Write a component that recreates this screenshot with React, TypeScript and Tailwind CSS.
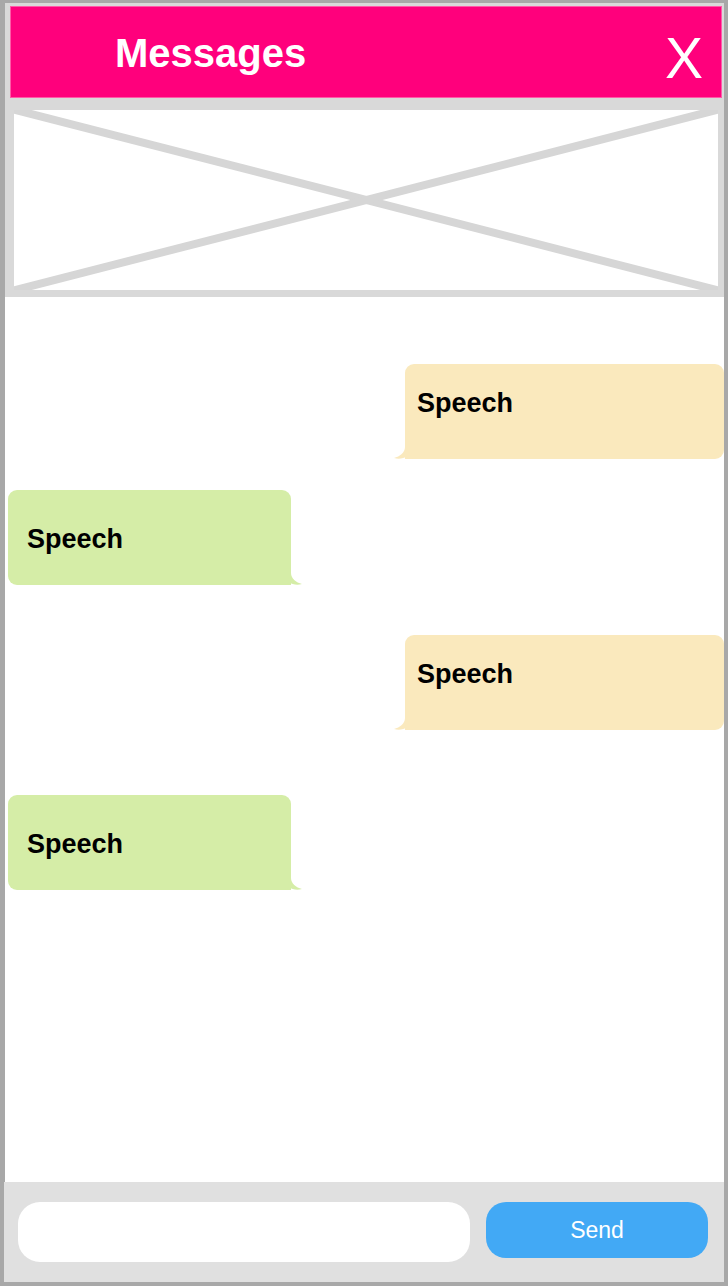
import React from 'react';

const font = { fontFamily: '"Liberation Sans", Arial, Helvetica, sans-serif' };

interface BubbleProps {
  side: 'left' | 'right';
  className?: string;
}

// speech bubble with a small tail at the bottom corner
const Bubble: React.FC<BubbleProps> = ({ side, className }) => {
  const isRight = side === 'right';
  const fill = isRight ? '#fae9bd' : '#d5eda7';
  return (
    <div className={`relative h-[95px] ${isRight ? 'self-end w-[319px]' : 'self-start ml-[3px] w-[283px]'} ${className ?? ''}`}>
      <div
        className={`h-full rounded-[9px] ${isRight ? 'bg-[#fae9bd] rounded-bl-none pl-[12px] pt-[23px]' : 'bg-[#d5eda7] rounded-br-none pl-[19px] pt-[33px]'}`}
      >
        <span className="block text-[27px] leading-[32px] font-bold text-black">Speech</span>
      </div>
      <svg
        width="22"
        height="16"
        viewBox="0 0 22 16"
        className={`absolute bottom-0 ${isRight ? '-left-[11px]' : '-right-[11px] -scale-x-100'}`}
      >
        <path d="M11 0 L11 4 C11 9.5 6 13.5 0 15 C5 16.5 9.5 15.5 13.5 13 C15.5 15.5 18 16 22 16 L22 0 Z" fill={fill} />
      </svg>
    </div>
  );
};

export default function App() {
  return (
    <div className="w-[728px] h-[1286px] bg-[#a8a8a8] pl-[5px] pr-[4px] pt-[3px] pb-[4px]" style={font}>
      <div className="flex flex-col h-full bg-white">
        {/* header + image placeholder */}
        <div className="bg-[#d9d9d9] h-[294px] flex flex-col">
          <div className="mt-[3px] ml-[5px] mr-[2px] h-[92px] bg-[#ff007c] border border-[#ff5aa8] flex items-center justify-between pl-[104px] pr-[18px]">
            <h1 className="text-[40px] font-bold text-white leading-none mt-[1px]">Messages</h1>
            <span className="text-[57px] text-white leading-none mt-[12px] font-light">X</span>
          </div>
          <div className="mt-[12px] ml-[9px] mr-[6px] h-[180px] bg-white overflow-hidden">
            <svg width="100%" height="100%" viewBox="0 0 704 180" preserveAspectRatio="none">
              <line x1="-10" y1="-3" x2="714" y2="183" stroke="#d6d6d6" strokeWidth="8" />
              <line x1="714" y1="-3" x2="-10" y2="183" stroke="#d6d6d6" strokeWidth="8" />
            </svg>
          </div>
        </div>

        {/* conversation */}
        <div className="flex-1 flex flex-col">
          <Bubble side="right" className="mt-[67px]" />
          <Bubble side="left" className="mt-[31px]" />
          <Bubble side="right" className="mt-[50px]" />
          <Bubble side="left" className="mt-[65px]" />
        </div>

        {/* composer */}
        <div className="h-[100px] bg-[#e0e0e0] -ml-[1px] flex items-start pt-[20px] pl-[14px] pr-[16px] gap-[16px]">
          <input
            type="text"
            className="w-[452px] h-[60px] rounded-[22px] bg-white outline-none px-4 text-[20px]"
            style={font}
          />
          <button className="w-[222px] h-[56px] rounded-[20px] bg-[#42a9f5] text-white text-[23px]" style={font}>
            Send
          </button>
        </div>
      </div>
    </div>
  );
}
